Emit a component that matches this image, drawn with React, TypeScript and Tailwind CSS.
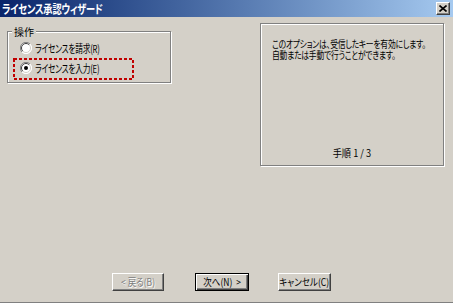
import type { ReactNode } from "react";

const jp = "font-['Noto_Sans_CJK_JP','Noto_Sans',sans-serif] [font-feature-settings:'palt']";

function Radio({ checked }: { checked?: boolean }) {
  return (
    <svg width="12" height="12" viewBox="0 0 12 12" className="shrink-0">
      <circle cx="6" cy="6" r="5.5" fill="#ffffff" />
      <path d="M10 2 A5.5 5.5 0 0 0 2 10" fill="none" stroke="#808080" strokeWidth="1" />
      <path d="M9.2 2.8 A4.5 4.5 0 0 0 2.8 9.2" fill="none" stroke="#404040" strokeWidth="1" />
      <path d="M2 10 A5.5 5.5 0 0 0 10 2" fill="none" stroke="#ffffff" strokeWidth="1" />
      <path d="M2.8 9.2 A4.5 4.5 0 0 0 9.2 2.8" fill="none" stroke="#d4d0c8" strokeWidth="1" />
      {checked && <circle cx="6" cy="6" r="2" fill="#000000" />}
    </svg>
  );
}

function Button({
  children,
  disabled,
  primary,
  className = "",
}: {
  children: ReactNode;
  disabled?: boolean;
  primary?: boolean;
  className?: string;
}) {
  const frame = primary
    ? "border border-black shadow-[inset_1px_1px_0_#ffffff,inset_-1px_-1px_0_#404040,inset_-2px_-2px_0_#808080]"
    : "border border-t-white border-l-white border-r-[#404040] border-b-[#404040] shadow-[inset_-1px_-1px_0_#808080]";
  return (
    <div
      className={`flex h-[18px] items-center justify-center overflow-hidden bg-[#d4d0c8] text-[10px] leading-none ${frame} ${
        disabled ? "text-[#808080] [text-shadow:1px_1px_0_#ffffff]" : "text-black"
      } ${className}`}
    >
      <span className="inline-block scale-x-[0.85] whitespace-nowrap">{children}</span>
    </div>
  );
}

export default function App() {
  return (
    <div className={`flex h-[303px] w-[453px] flex-col border-b border-[#808080] bg-[#d4d0c8] text-black ${jp}`}>
      <div className="flex h-[17px] shrink-0 items-center justify-between bg-gradient-to-r from-[#0a246a] to-[#a6caf0] pl-[2px] pr-[3px]">
        <span className="inline-block origin-left scale-x-[0.77] whitespace-nowrap text-[12px] font-bold leading-none tracking-[-0.3px] text-white">
          ライセンス承認ウィザード
        </span>
        <div className="flex h-[13px] w-[14px] items-center justify-center border border-t-white border-l-white border-r-[#404040] border-b-[#404040] bg-[#d4d0c8] shadow-[inset_-1px_-1px_0_#808080]">
          <svg width="8" height="7" viewBox="0 0 8 7">
            <path d="M0.5 0.5 L7.5 6.5 M7.5 0.5 L0.5 6.5" stroke="#000" strokeWidth="1.6" />
          </svg>
        </div>
      </div>

      <div className="flex flex-1 items-start">
        <div className="relative ml-[7px] mt-[14px] h-[52px] w-[164px] border border-[#808080] shadow-[inset_1px_1px_0_#ffffff,1px_1px_0_#ffffff]">
          <span className="absolute left-[4px] top-[-6px] bg-[#d4d0c8] px-[2px] text-[10px] leading-[12px]">
            操作
          </span>
          <div className="flex flex-col pl-[12px] pt-[6px]">
            <div className="flex h-[20px] items-center gap-[3px] text-[11px]">
              <Radio />
              <span className="inline-block origin-left scale-x-[0.7] whitespace-nowrap tracking-[-0.3px]">
                ライセンスを請求(R)
              </span>
            </div>
            <div className="flex h-[20px] items-center gap-[3px] text-[11px]">
              <Radio checked />
              <span className="inline-block origin-left scale-x-[0.7] whitespace-nowrap tracking-[-0.3px]">
                ライセンスを入力(E)
              </span>
            </div>
          </div>
          <svg className="absolute left-[5px] top-[26px]" width="121" height="22" viewBox="0 0 121 22">
            <rect x="1" y="1" width="119" height="20" fill="none" stroke="#c00000" strokeWidth="2" strokeDasharray="3 2" />
          </svg>
        </div>

        <div className="ml-auto mr-[9px] mt-[6px] flex h-[143px] w-[184px] flex-col border border-[#808080] px-[11px] pb-[6px] pt-[14px] shadow-[inset_1px_1px_0_#ffffff,1px_1px_0_#ffffff]">
          <div className="origin-left scale-x-[0.78] whitespace-nowrap text-[10px] leading-[11px] tracking-[-0.3px]">
            <p>このオプションは、受信したキーを有効にします。</p>
            <p>自動または手動で行うことができます。</p>
          </div>
          <p className="mt-auto text-center text-[10px] leading-[13px]">
            <span className="inline-block scale-x-[0.92]">手順 1 / 3</span>
          </p>
        </div>
      </div>

      <div className="flex shrink-0 pb-[11px] pl-[112px]">
        <Button disabled className="w-[52px]">
          &lt; 戻る(B)
        </Button>
        <Button primary className="ml-[31px] w-[54px]">
          次へ(N)&nbsp;&nbsp;&gt;
        </Button>
        <Button className="ml-[29px] w-[53px]">キャンセル(C)</Button>
      </div>
    </div>
  );
}
